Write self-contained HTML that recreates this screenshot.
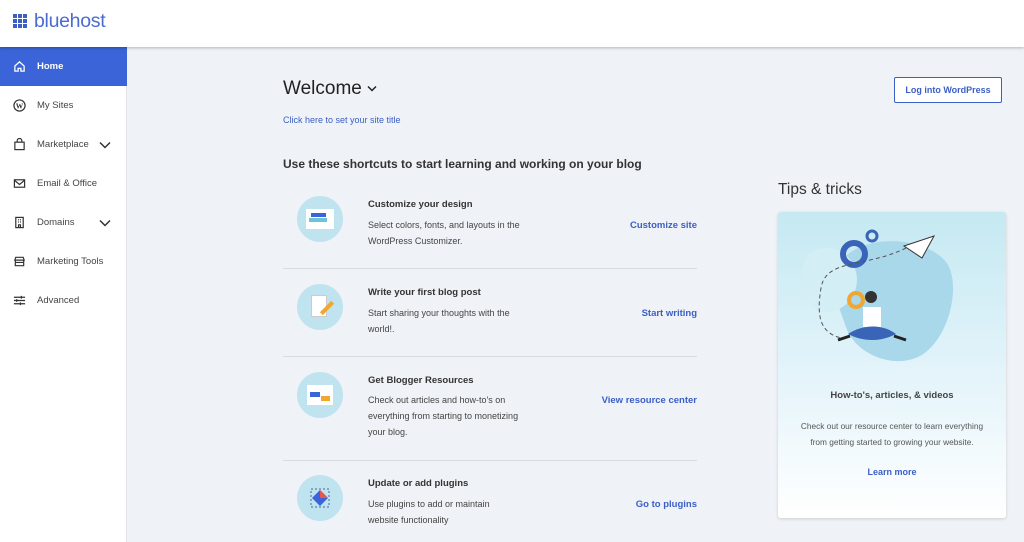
<!DOCTYPE html>
<html><head><style>
*{margin:0;padding:0;box-sizing:border-box}
body{width:1024px;height:542px;overflow:hidden;background:#eff2f6;font-family:"Liberation Sans",sans-serif;position:relative;color:#333}
.hdr{position:absolute;left:0;top:0;width:1024px;height:47px;background:#fff;box-shadow:0 1px 3px rgba(0,0,0,.25);z-index:2}
.logo{position:absolute;left:13px;top:14px;display:grid;grid-template-columns:repeat(3,4px);gap:1px}
.logo i{width:4px;height:4px;background:#3b5fc6;display:block}
.logotx{position:absolute;left:34px;top:10px;font-size:19.5px;color:#4a6cd0;letter-spacing:-.3px}
.side{position:absolute;left:0;top:47px;width:127px;height:495px;background:#fff;border-right:1px solid #e2e5ea}
.it{position:absolute;left:0;width:127px;height:39px;font-size:9.5px;color:#444;display:flex;align-items:center}
.it svg{position:absolute;left:13px}
.it span{position:absolute;left:37px}
.it.act{background:#3a64d8;color:#fff;font-weight:bold}
.chev{position:absolute;left:99px}
.t{position:absolute;white-space:nowrap}
.circ{position:absolute;left:297px;width:46px;height:46px;border-radius:50%;background:#bfe3ef}
.hr{position:absolute;left:283px;width:414px;height:1px;background:#d8dce2}
.h{font-size:9.5px;font-weight:bold;color:#333}
.p{font-size:9px;color:#444;line-height:16px}
.lk{font-size:9.5px;font-weight:bold;color:#3b5fc6;right:327px}
</style></head><body>
<div class="hdr">
<div class="logo"><i></i><i></i><i></i><i></i><i></i><i></i><i></i><i></i><i></i></div>
<div class="logotx">bluehost</div>
</div>
<div class="side">
<div class="it act" style="top:0"><svg width="13" height="13" viewBox="0 0 14 14" fill="none" stroke="#fff" stroke-width="1.4"><path d="M2 6.5L7 2l5 4.5V12H8.5V9h-3v3H2z"/></svg><span>Home</span></div>
<div class="it" style="top:39px"><svg width="13" height="13" viewBox="0 0 14 14"><circle cx="7" cy="7" r="6" fill="none" stroke="#333" stroke-width="1.3"/><text x="7" y="10" font-size="8" text-anchor="middle" font-weight="bold" fill="#333" font-family="Liberation Serif">W</text></svg><span>My Sites</span></div>
<div class="it" style="top:78px"><svg width="13" height="13" viewBox="0 0 14 14" fill="none" stroke="#333" stroke-width="1.3"><rect x="2" y="4.5" width="10" height="8"/><path d="M4.5 4.5V3a2.5 2.5 0 015 0v1.5"/></svg><span>Marketplace</span><svg class="chev" style="left:99px" width="12" height="8" viewBox="0 0 12 8" fill="none" stroke="#333" stroke-width="1.5"><path d="M1 1.5l5 5 5-5"/></svg></div>
<div class="it" style="top:117px"><svg width="13" height="13" viewBox="0 0 14 14" fill="none" stroke="#333" stroke-width="1.3"><rect x="1.5" y="3" width="11" height="8"/><path d="M1.5 3.5L7 8l5.5-4.5"/></svg><span>Email &amp; Office</span></div>
<div class="it" style="top:156px"><svg width="13" height="13" viewBox="0 0 14 14" fill="none" stroke="#333" stroke-width="1.3"><rect x="3" y="1.5" width="8" height="11"/><path d="M5.5 4h1M7.5 4h1M5.5 6.5h1M7.5 6.5h1M6 12.5v-3h2v3"/></svg><span>Domains</span><svg class="chev" style="left:99px" width="12" height="8" viewBox="0 0 12 8" fill="none" stroke="#333" stroke-width="1.5"><path d="M1 1.5l5 5 5-5"/></svg></div>
<div class="it" style="top:195px"><svg width="13" height="13" viewBox="0 0 14 14" fill="none" stroke="#333" stroke-width="1.3"><path d="M2 5.5L3 2.5h8l1 3zM2.5 5.5v6h9v-6M2 8h10"/></svg><span>Marketing Tools</span></div>
<div class="it" style="top:234px"><svg width="13" height="13" viewBox="0 0 14 14" fill="none" stroke="#333" stroke-width="1.3"><path d="M1 3.5h12M1 7h12M1 10.5h12M9 2v3M4 5.5v3M8 9v3"/></svg><span>Advanced</span></div>
</div>

<div class="t" style="left:283px;top:78px;font-size:19px;color:#222">Welcome <svg width="10" height="7" viewBox="0 0 10 7" fill="none" stroke="#222" stroke-width="1.5" style="vertical-align:middle"><path d="M1 1.5l4 4 4-4"/></svg></div>
<div class="t" style="left:283px;top:115px;font-size:9px;color:#3b5fc6">Click here to set your site title</div>
<div style="position:absolute;left:894px;top:77px;width:108px;height:26px;border:1px solid #3b5fc6;border-radius:2px;background:#fff;color:#3b5fc6;font-size:9px;font-weight:bold;text-align:center;line-height:24px">Log into WordPress</div>
<div class="t" style="left:283px;top:157px;font-size:12px;font-weight:bold;color:#333">Use these shortcuts to start learning and working on your blog</div>

<div class="circ" style="top:196px"><div style="position:absolute;left:9px;top:13px;width:28px;height:20px;background:#fff"></div><div style="position:absolute;left:14px;top:17px;width:15px;height:4px;background:#3a64d8"></div><div style="position:absolute;left:12px;top:22px;width:18px;height:4px;background:#6bc4dc"></div></div>
<div class="t h" style="left:368px;top:199px">Customize your design</div>
<div class="t p" style="left:368px;top:217px">Select colors, fonts, and layouts in the<br>WordPress Customizer.</div>
<div class="t lk" style="top:220px">Customize site</div>
<div class="hr" style="top:268px"></div>

<div class="circ" style="top:284px"><div style="position:absolute;left:14px;top:11px;width:16px;height:22px;background:#fff;border:1px solid #ccc"></div><div style="position:absolute;left:22px;top:22px;width:16px;height:4px;background:#f0a630;transform:rotate(-45deg)"></div></div>
<div class="t h" style="left:368px;top:287px">Write your first blog post</div>
<div class="t p" style="left:368px;top:305px">Start sharing your thoughts with the<br>world!.</div>
<div class="t lk" style="top:308px">Start writing</div>
<div class="hr" style="top:356px"></div>

<div class="circ" style="top:372px"><div style="position:absolute;left:10px;top:13px;width:26px;height:20px;background:#fff"></div><div style="position:absolute;left:13px;top:20px;width:10px;height:5px;background:#3a64d8"></div><div style="position:absolute;left:24px;top:24px;width:9px;height:5px;background:#f0a630"></div></div>
<div class="t h" style="left:368px;top:375px">Get Blogger Resources</div>
<div class="t p" style="left:368px;top:392px">Check out articles and how-to's on<br>everything from starting to monetizing<br>your blog.</div>
<div class="t lk" style="top:395px">View resource center</div>
<div class="hr" style="top:460px"></div>

<div class="circ" style="top:475px"><svg style="position:absolute;left:11px;top:11px" width="24" height="24" viewBox="0 0 24 24"><rect x="3" y="3" width="18" height="18" fill="none" stroke="#4a6aa0" stroke-dasharray="2 2"/><path d="M12 4L20 12 12 20 4 12z" fill="#3a64d8"/><path d="M12 4L20 12H12z" fill="#e8534a"/></svg></div>
<div class="t h" style="left:368px;top:478px">Update or add plugins</div>
<div class="t p" style="left:368px;top:496px">Use plugins to add or maintain<br>website functionality</div>
<div class="t lk" style="top:499px">Go to plugins</div>

<div class="t" style="left:778px;top:181px;font-size:15.5px;color:#333">Tips &amp; tricks</div>
<div style="position:absolute;left:778px;top:212px;width:228px;height:306px;border-radius:3px;background:linear-gradient(#c5e9f2 0%,#dff2f9 45%,#ffffff 100%);box-shadow:0 1px 3px rgba(0,0,0,.15)">
<svg width="228" height="150" viewBox="0 0 228 150" style="position:absolute;left:0;top:0">
<g transform="translate(-22,0)">
<path d="M95 40c30-20 80-10 95 10s5 70-20 90-70 5-80-25-25-55 5-75z" fill="#a9d8ea"/>
<path d="M55 40c20-10 40 0 45 20s-10 40-30 40-35-40-15-60z" fill="#d4eef6"/>
<circle cx="98" cy="42" r="11" fill="none" stroke="#3a64b8" stroke-width="6"/>
<circle cx="116" cy="24" r="5" fill="none" stroke="#3a64b8" stroke-width="3"/>
<path d="M148 34l30-10-12 22z" fill="#fff" stroke="#333"/>
<path d="M150 36c-40 20-80 10-85 40s0 45 20 50" fill="none" stroke="#555" stroke-dasharray="4 3"/>
<circle cx="100" cy="88" r="7" fill="none" stroke="#f0a630" stroke-width="4"/>
<circle cx="115" cy="85" r="6" fill="#333"/>
<rect x="107" y="95" width="18" height="20" fill="#fff"/>
<path d="M92 122c15-10 35-10 48 0-15 8-33 8-48 0z" fill="#3a64b8"/>
<path d="M82 128l12-4M150 128l-12-4" stroke="#222" stroke-width="3"/>
</g>
</svg>
<div class="t h" style="left:0;width:228px;text-align:center;top:178px;color:#444">How-to's, articles, &amp; videos</div>
<div class="t" style="left:0;width:228px;text-align:center;top:206px;font-size:8.3px;line-height:16px;color:#555">Check out our resource center to learn everything<br>from getting started to growing your website.</div>
<div class="t" style="left:0;width:228px;text-align:center;top:255px;font-size:9px;font-weight:bold;color:#3b5fc6">Learn more</div>
</div>
</body></html>
